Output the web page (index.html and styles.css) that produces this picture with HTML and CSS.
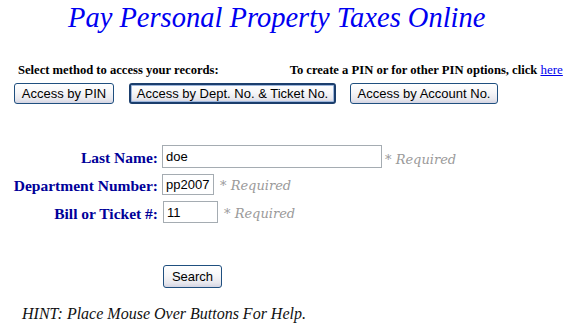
FILE: index.html
```html
<!DOCTYPE html>
<html>
<head>
<meta charset="utf-8">
<link rel="stylesheet" href="styles.css">
</head>
<body>
<div class="page">
  <h1 class="title">Pay Personal Property Taxes Online</h1>
  <div class="method-row">
    <span class="method-label">Select method to access your records:</span>
    <span class="pin-note">To create a PIN or for other PIN options, click <a href="#" class="link">here</a></span>
  </div>
  <div class="btn-row">
    <button class="xp-btn btn-pin">Access by PIN</button>
    <button class="xp-btn xp-default btn-dept">Access by Dept. No. &amp; Ticket No.</button>
    <button class="xp-btn btn-acct">Access by Account No.</button>
  </div>
  <div class="form-grid">
    <label class="lbl">Last Name:</label>
    <div class="field"><input class="inp inp-name" value="doe"><span class="req req-tight">* Required</span></div>
    <label class="lbl">Department Number:</label>
    <div class="field"><input class="inp inp-dept" value="pp2007"><span class="req">* Required</span></div>
    <label class="lbl">Bill or Ticket #:</label>
    <div class="field"><input class="inp inp-bill" value="11"><span class="req">* Required</span></div>
  </div>
  <div class="search-row">
    <button class="xp-btn btn-search">Search</button>
  </div>
  <p class="hint">HINT: Place Mouse Over Buttons For Help.</p>
</div>
</body>
</html>
```

FILE: styles.css
```css
html, body {
  margin: 0;
  padding: 0;
  background: #ffffff;
}
.page {
  width: 569px;
  height: 328px;
  overflow: hidden;
  font-family: "Liberation Serif", "Times New Roman", serif;
}
.title {
  margin: 0;
  padding-top: 3px;
  padding-left: 68px;
  font-size: 28.5px;
  font-weight: normal;
  font-style: italic;
  color: #0000f0;
  line-height: 30px;
  white-space: nowrap;
}
.method-row {
  display: flex;
  align-items: baseline;
  margin-top: 29px;
  padding-left: 18px;
  font-size: 12.6px;
  font-weight: bold;
  line-height: 15px;
  color: #000;
  white-space: nowrap;
}
.pin-note {
  margin-left: 71px;
}
.link {
  color: #0000ee;
  font-weight: normal;
  text-decoration: underline;
  font-size: 13px;
}
.btn-row {
  display: flex;
  margin-top: 5px;
  padding-left: 14px;
  height: 21px;
}
.xp-btn {
  box-sizing: border-box;
  height: 21px;
  padding: 0 5px;
  font-family: "Liberation Sans", Arial, sans-serif;
  font-size: 13px;
  color: #000;
  border: 1px solid #1f4f7f;
  border-radius: 3px;
  background: linear-gradient(#ffffff 0%, #f6f6f8 45%, #e8e8ee 80%, #d4d4e2 100%);
  line-height: 18px;
  white-space: nowrap;
}
.xp-default {
  border: 2px solid #1b3e6d;
  box-shadow: inset 0 0 0 1px #9db6dc;
  line-height: 16px;
}
.btn-pin { width: 100px; }
.btn-dept { width: 207px; margin-left: 15px; }
.btn-acct { width: 148px; margin-left: 14px; }
.form-grid {
  display: grid;
  grid-template-columns: 158px auto;
  column-gap: 4px;
  row-gap: 4px;
  margin-top: 40px;
  align-items: center;
}
.lbl {
  text-align: right;
  font-size: 15.5px;
  font-weight: bold;
  color: #000099;
  white-space: nowrap;
  line-height: 20px;
  padding-top: 4px;
}
.field {
  display: flex;
  align-items: center;
}
.inp {
  box-sizing: border-box;
  height: 21px;
  border: 1px solid #a5acb2;
  padding: 0 3px;
  font-family: "Liberation Sans", Arial, sans-serif;
  font-size: 13px;
  color: #000;
  background: #fff;
}
.inp-name { width: 220px; height: 23px; }
.inp-dept { width: 52px; }
.inp-bill { width: 55px; margin-left: 1px; height: 22px; }
.req {
  margin-left: 6px;
  font-family: "DejaVu Serif", Georgia, serif;
  font-style: italic;
  font-size: 13px;
  color: #9a9a9a;
  padding-top: 3px;
}
.req-tight { margin-left: 3px; padding-top: 6px; }
.search-row {
  margin-top: 41px;
  padding-left: 163px;
}
.btn-search {
  width: 59px;
  height: 23px;
}
.hint {
  margin: 17px 0 0 22px;
  font-size: 16px;
  font-style: italic;
  color: #111;
  line-height: 18px;
}
```
